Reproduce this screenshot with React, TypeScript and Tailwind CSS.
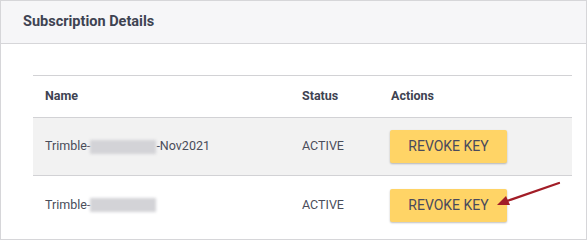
const rows = [
  { suffix: "-Nov2021", status: "ACTIVE", shaded: true },
  { suffix: "", status: "ACTIVE", shaded: false },
];

function Redacted() {
  return <span className="inline-block w-[66px] h-[14px] bg-[#d3d3d7] blur-[1.5px] align-middle" />;
}

export default function App() {
  return (
    <div
      className="relative w-[587px] h-[240px] bg-white border border-[#d6d6d9] overflow-hidden"
      style={{ fontFamily: "Roboto, 'Liberation Sans', sans-serif" }}
    >
      {/* Header */}
      <div className="h-[43px] bg-[#f6f6f8] border-b border-[#d6d6d9] flex items-center pl-[22px]">
        <h2 className="text-[14.5px] font-bold text-[#3e4352]">Subscription Details</h2>
      </div>

      {/* Table */}
      <div className="pt-[31px] pl-[32px] pr-[14px]">
        <div className="border-t border-[#d2d2d5]">
          <div className="grid grid-cols-[257px_89px_1fr] h-[42px] items-center text-[12.5px] font-bold text-[#3e4352] border-b border-[#d2d2d5]">
            <div className="pl-[12px]">Name</div>
            <div className="pl-[12px]">Status</div>
            <div className="pl-[12px]">Actions</div>
          </div>
          {rows.map((r, i) => (
            <div
              key={i}
              className={`grid grid-cols-[257px_89px_1fr] h-[58px] items-center text-[12.5px] text-[#4a4d5a] ${
                r.shaded ? "bg-[#f2f2f2] border-b border-[#d2d2d5]" : ""
              }`}
            >
              <div className="pl-[12px] flex items-center">
                <span>Trimble-</span>
                <Redacted />
                {r.suffix && <span>{r.suffix}</span>}
              </div>
              <div className="pl-[12px]">{r.status}</div>
              <div className="pl-[11px]">
                <button className="w-[117px] h-[33px] bg-[#ffd466] rounded-[2px] text-[14px] text-[#4a4a5c] shadow-[0_1px_2px_rgba(0,0,0,0.25)]">
                  REVOKE KEY
                </button>
              </div>
            </div>
          ))}
        </div>
      </div>

      {/* Annotation arrow */}
      <svg className="absolute left-0 top-0 pointer-events-none" width="587" height="240">
        <line x1="558" y1="182" x2="506" y2="200" stroke="#a21d27" strokeWidth="2.2" strokeLinecap="round" />
        <polygon points="496,204 505,195 509,204" fill="#a21d27" />
      </svg>
    </div>
  );
}
